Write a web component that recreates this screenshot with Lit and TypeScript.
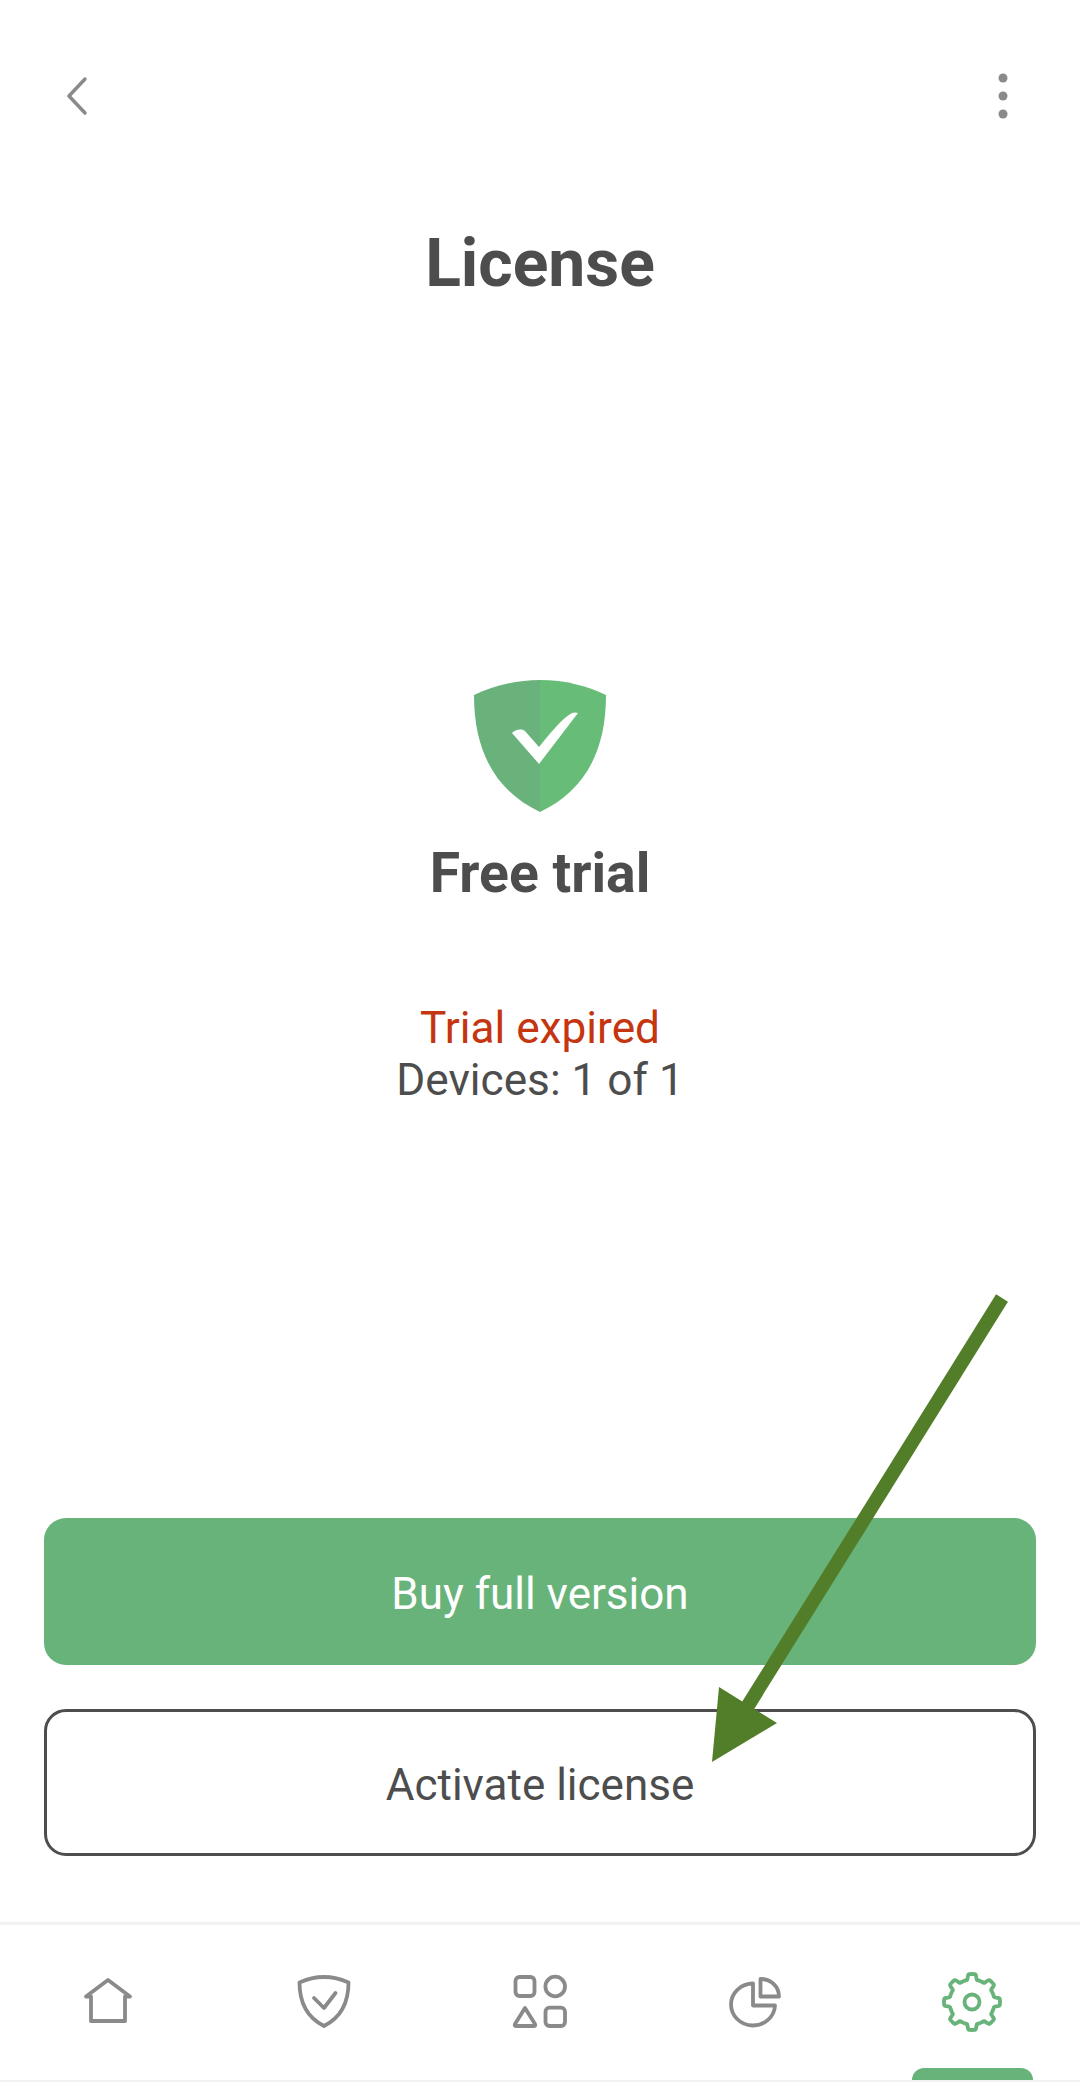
import { LitElement, html, css, svg } from 'lit';
import { customElement } from 'lit/decorators.js';

// gear outline sampled from a polar function, 8 teeth
function gearPath(cx: number, cy: number, inner: number, outer: number) {
  const points: string[] = [];
  const steps = 240;
  for (let i = 0; i < steps; i++) {
    const angle = (i / steps) * Math.PI * 2;
    const wave = Math.cos(angle * 8);
    const tooth = Math.max(0, Math.min(1, (wave + 0.25) / 0.9));
    const eased = tooth * tooth * (3 - 2 * tooth);
    const r = inner + (outer - inner) * eased;
    const x = cx + Math.sin(angle) * r;
    const y = cy - Math.cos(angle) * r;
    points.push(`${x.toFixed(2)} ${y.toFixed(2)}`);
  }
  return `M${points.join('L')}Z`;
}

const navItems = [
  {
    active: false,
    icon: svg`
      <path d="M8 24.500 L30 8 L52 24.500 H47 V49 H13 V24.500 Z" />`,
  },
  {
    active: false,
    icon: svg`
      <path d="M30 5 C39 5 47 7 54.500 10.500 C54.500 30 48 45 30 54 C12 45 5.500 30 5.500 10.500 C13 7 21 5 30 5 Z" />
      <path d="M20 26 L30 36 L41.500 21" />`,
  },
  {
    active: false,
    icon: svg`
      <rect x="5.500" y="5" width="19" height="19" rx="4" />
      <circle cx="45.200" cy="14.500" r="9.800" />
      <rect x="35.500" y="35.700" width="19.500" height="18.300" rx="4" />
      <path d="M15 36 L25 52 Q26 54 23.500 54 H6.500 Q4 54 5 52 Z" />`,
  },
  {
    active: false,
    icon: svg`
      <path d="M27 11.500 V33.500 H49 A22 21 0 1 1 27 11.500 Z" />
      <path d="M34.500 7 V24.500 H53 A18 17.500 0 0 0 34.500 7 Z" />`,
  },
  {
    active: true,
    icon: svg`
      <path d=${gearPath(30, 30, 22.5, 28)} />
      <circle cx="30" cy="30" r="7.500" />`,
  },
];

@customElement('app-root')
export class AppRoot extends LitElement {
  static styles = css`
    :host {
      display: block;
      width: 1080px;
      height: 2082px;
      background: #fff;
      font-family: Roboto, 'Liberation Sans', sans-serif;
      color: #4d4d4d;
    }
    .page {
      position: relative;
      display: flex;
      flex-direction: column;
      align-items: center;
      height: 2082px;
      overflow: hidden;
    }
    .toolbar {
      align-self: stretch;
      display: flex;
      justify-content: space-between;
      align-items: center;
      height: 192px;
      padding: 0 71px 0 62px;
      box-sizing: border-box;
    }
    .toolbar svg {
      display: block;
    }
    .title {
      margin: 32px 0 0;
      font-size: 66px;
      line-height: 80px;
      font-weight: 700;
    }
    .logo {
      display: block;
      margin-top: 376px;
    }
    .plan {
      margin: 29px 0 0;
      font-size: 55.3px;
      line-height: 66px;
      font-weight: 700;
    }
    .status {
      margin-top: 95px;
      font-size: 44.2px;
      line-height: 52px;
      text-align: center;
    }
    .expired {
      color: #c43510;
    }
    .actions {
      margin-top: auto;
      align-self: stretch;
      display: flex;
      flex-direction: column;
      gap: 44px;
      padding: 0 44px 66px;
    }
    .btn {
      display: flex;
      align-items: center;
      justify-content: center;
      height: 147px;
      box-sizing: border-box;
      padding-top: 4px;
      border-radius: 22px;
      font-size: 44px;
    }
    .btn.primary {
      background: #68b37a;
      color: #fff;
    }
    .btn.outline {
      border: 3px solid #4d4d4d;
    }
    .nav {
      align-self: stretch;
      display: grid;
      grid-template-columns: repeat(5, 1fr);
      height: 160px;
      box-sizing: border-box;
      border-top: 3px solid #f2f2f2;
      border-bottom: 2px solid #f2f2f2;
    }
    .nav-item {
      position: relative;
      display: flex;
      align-items: center;
      justify-content: center;
      padding-bottom: 1px;
    }
    .nav-item svg {
      display: block;
      fill: none;
      stroke: #8a8a8a;
      stroke-width: 3.8;
      stroke-linejoin: round;
      stroke-linecap: round;
    }
    .nav-item.active svg {
      stroke: #68b37a;
    }
    .indicator {
      position: absolute;
      left: 48px;
      bottom: 0;
      width: 121px;
      height: 12px;
      border-radius: 12px 12px 0 0;
      background: #68b37a;
    }
    .arrow {
      position: absolute;
      inset: 0;
      pointer-events: none;
    }
  `;

  render() {
    return html`
      <div class="page">
        <div class="toolbar">
          <svg width="26" height="42" viewBox="0 0 26 42" fill="none" stroke="#8a8a8a" stroke-width="3.500" stroke-linecap="round" stroke-linejoin="round">
            <path d="M23 4 L7 21 L23 38" />
          </svg>
          <svg width="12" height="46" viewBox="0 0 12 46" fill="#8a8a8a">
            <circle cx="6" cy="5" r="4.500" />
            <circle cx="6" cy="23" r="4.500" />
            <circle cx="6" cy="41" r="4.500" />
          </svg>
        </div>
        <h1 class="title">License</h1>
        <svg class="logo" width="132" height="132" viewBox="0 0 132 132">
          <path fill="#69b27b" d="M66 0 C41 0 19 6 0 15 C0 75 24 112 66 132 Z" />
          <path fill="#67bd77" d="M66 0 C91 0 113 6 132 15 C132 75 108 112 66 132 Z" />
          <path fill="#fff" d="M38 53 C41 50 47 48 51 51 L65 67 C75 55 88 38 98 33 Q101 32 104 33 L65 84 Z" />
        </svg>
        <h2 class="plan">Free trial</h2>
        <div class="status">
          <div class="expired">Trial expired</div>
          <div>Devices: 1 of 1</div>
        </div>
        <div class="actions">
          <div class="btn primary">Buy full version</div>
          <div class="btn outline">Activate license</div>
        </div>
        <div class="nav">
          ${navItems.map(
            (item) => html`
              <div class="nav-item ${item.active ? 'active' : ''}">
                <svg width="60" height="60" viewBox="0 0 60 60">${item.icon}</svg>
                ${item.active ? html`<div class="indicator"></div>` : ''}
              </div>
            `,
          )}
        </div>
        <svg class="arrow" width="1080" height="2082" viewBox="0 0 1080 2082">
          <path fill="none" stroke="#527e2a" stroke-width="14" d="M1002 1298 L744 1712" />
          <path fill="#527e2a" d="M712 1762 L719 1687 L777 1723 Z" />
        </svg>
      </div>
    `;
  }
}
